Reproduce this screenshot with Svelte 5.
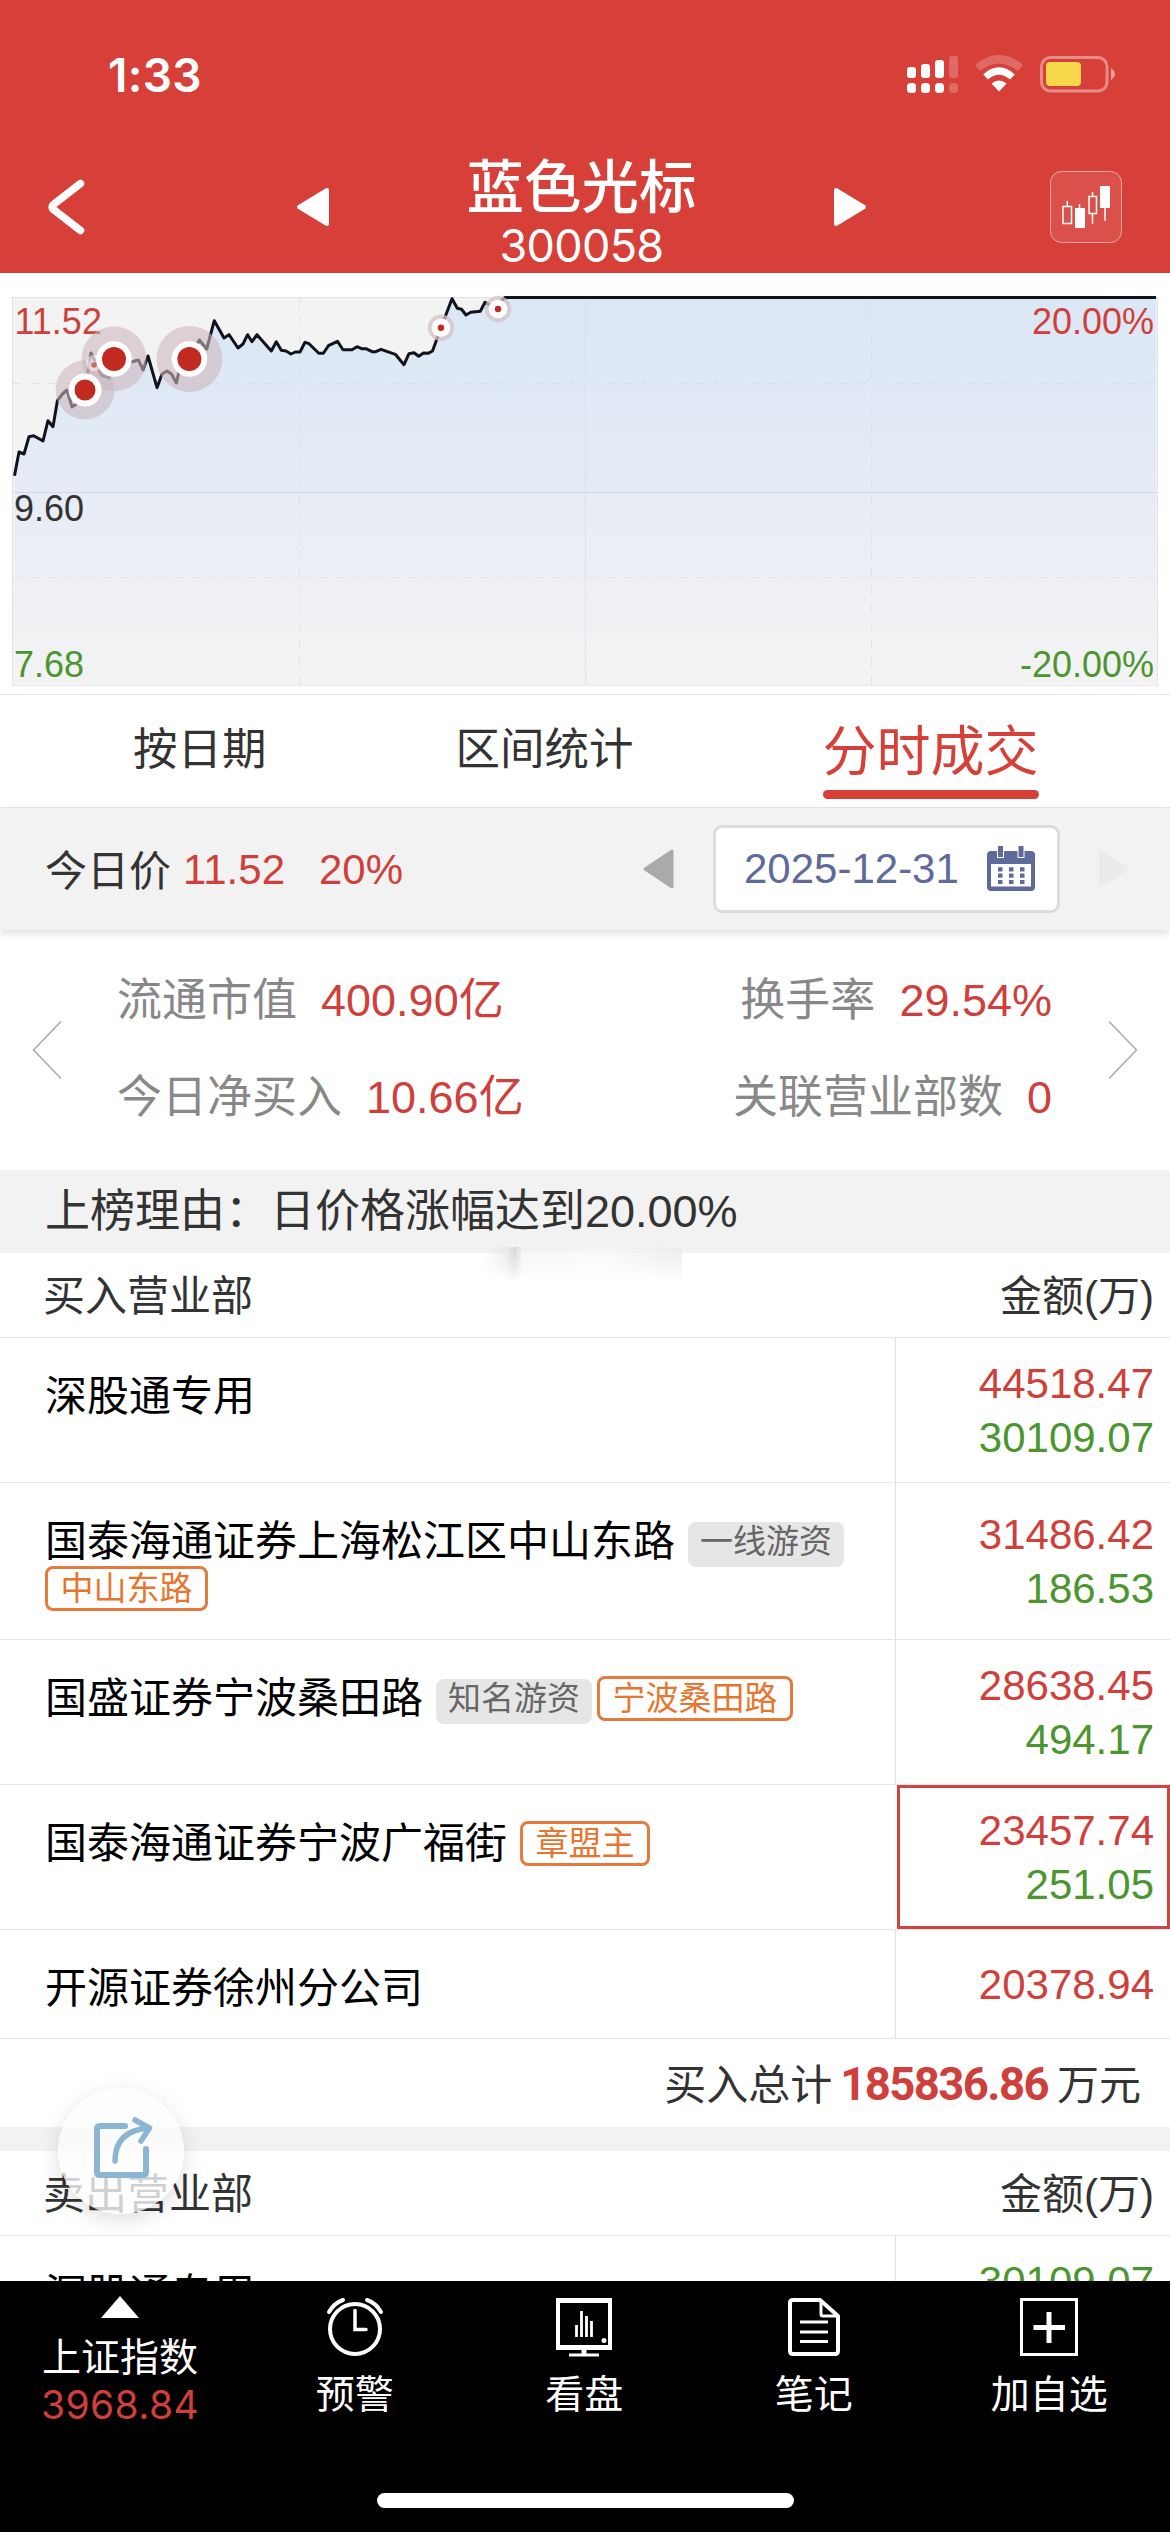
<script>
  const seats = [
    { name: '深股通专用', tags: [], amounts: ['44518.47', '30109.07'] },
    {
      name: '国泰海通证券上海松江区中山东路',
      tags: [{ text: '一线游资', kind: 'grey' }, { text: '中山东路', kind: 'orange' }],
      amounts: ['31486.42', '186.53'],
      tall: true
    },
    {
      name: '国盛证券宁波桑田路',
      tags: [{ text: '知名游资', kind: 'grey' }, { text: '宁波桑田路', kind: 'orange' }],
      amounts: ['28638.45', '494.17']
    },
    {
      name: '国泰海通证券宁波广福街',
      tags: [{ text: '章盟主', kind: 'orange' }],
      amounts: ['23457.74', '251.05'],
      active: true
    },
    { name: '开源证券徐州分公司', tags: [], amounts: ['20378.94'] }
  ];

  // Intraday price line, in chart units (origin at the chart's top left)
  const line =
    '14.5,202.7 19,179 24,181 29,163.7 33.7,162.7 43,168 48,147.7 53,153.7 57.4,127.7 62.4,121 67,117 72,134 76.5,131 85,117 91,80 101.4,102 109,105 114,86 132,88.7 138.5,87 143,97 148,83 157,114.7 162,101 167,98 171.5,101 176.4,110 180,94 189.4,86 199.4,67 206.7,76 214.3,47.7 224,65 229,61.7 238,75 243,71 247.6,61.7 252,68.7 257,61.7 271.3,78 276.3,68.7 281.3,77.3 286,78 291,81 295.4,79 300,79 305,69.3 309,70.7 318.8,80.3 323.4,80.3 328.4,72.7 337.5,68.3 343,76.7 352,76.7 357,73.7 361.6,75.7 366,75.7 372,78.7 375.8,78.7 381,76.3 395.3,81.3 404,91.7 409,80.7 414,79.7 418.7,83.3 423.6,80 428,80.3 432.5,78 441,54.7 452,25.7 457.3,35.3 461.5,36.3 466,42 470.7,39.3 480.3,38.3 485,29.3 494,34 505,24.5 1156,24.5';

  const bigDots = [
    { x: 85, y: 117, halo: 29.5, ring: 16.5, core: 10.5 },
    { x: 114, y: 86, halo: 32.5, ring: 17.8, core: 12 },
    { x: 189.4, y: 86, halo: 33, ring: 17.8, core: 12 }
  ];
  const smallDots = [
    { x: 441, y: 54.7 },
    { x: 498, y: 36 }
  ];
</script>

<div class="screen">
  <header>
    <div class="status">
      <span class="time">1:33</span>
      <svg class="status-icons" width="210" height="40" viewBox="906 54 210 40">
        <g fill="#fff">
          <rect x="907" y="67" width="9" height="11" rx="3" />
          <rect x="921" y="64" width="9" height="14" rx="3" />
          <rect x="935" y="60" width="9" height="18" rx="3" />
          <rect x="907" y="83" width="9" height="10" rx="3.5" />
          <rect x="921" y="83" width="9" height="10" rx="3.5" />
          <rect x="935" y="83" width="9" height="10" rx="3.5" />
        </g>
        <g fill="#fff" opacity=".22">
          <rect x="949" y="56" width="9" height="22" rx="3" />
          <rect x="949" y="83" width="9" height="10" rx="3.5" />
        </g>
        <path d="M977.5 68 Q999 50.5 1020.5 68" fill="none" stroke="#fff" stroke-opacity=".22" stroke-width="8" />
        <path d="M985.5 77 Q999 65 1012.5 77" fill="none" stroke="#fff" stroke-width="7" />
        <path d="M991.5 83.5 Q999 77.5 1006.5 83.5 L999 91.5 Z" fill="#fff" />
        <rect x="1041.5" y="57.5" width="65.5" height="33.5" rx="9" fill="none" stroke="#fff" stroke-opacity=".4" stroke-width="3" />
        <rect x="1046" y="62" width="35" height="24" rx="4" fill="#f8d84a" />
        <path d="M1111 68 Q1115 71 1115 74 Q1115 77 1111 80 Z" fill="#fff" fill-opacity=".5" />
      </svg>
    </div>
    <nav>
      <svg class="back" width="44" height="62" viewBox="44 176 44 62">
        <path d="M80.500 183.500 L53.500 204.500 Q50.500 207 53.500 209.500 L80.500 230.500" fill="none" stroke="#fff" stroke-width="7.500" stroke-linecap="round" />
      </svg>
      <svg class="left" width="36" height="42" viewBox="294 186 36 42">
        <path d="M326 190 L298 207 L326 224 Z" fill="#fff" stroke="#fff" stroke-width="4" stroke-linejoin="round" />
      </svg>
      <div class="title">
        <h1>蓝色光标</h1>
        <span>300058</span>
      </div>
      <svg width="36" height="42" viewBox="833 186 36 42">
        <path d="M837 190 L865 207 L837 224 Z" fill="#fff" stroke="#fff" stroke-width="4" stroke-linejoin="round" />
      </svg>
      <svg class="kline" width="74" height="74" viewBox="1049 170 74 74">
        <rect x="1050.5" y="171.5" width="71" height="71" rx="11" fill="#fff" fill-opacity=".09" stroke="#fff" stroke-opacity=".5" />
        <g fill="none" stroke="#fff" stroke-width="1.5">
          <rect x="1063" y="206.5" width="8.5" height="17" />
          <rect x="1089" y="196.5" width="7.5" height="17" />
          <path d="M1067.300 201 V206 M1079.5 204 V208 M1092.5 192 V196 M1092.5 214 V224 M1105 208 V221" />
        </g>
        <rect x="1075" y="208" width="10" height="20" fill="#fff" />
        <rect x="1100" y="186" width="10" height="22" fill="#fff" />
      </svg>
    </nav>
  </header>

  <section class="chart">
    <svg width="1170" height="421" viewBox="0 0 1170 421">
      <defs>
        <linearGradient id="area" x1="0" y1="24" x2="0" y2="413" gradientUnits="userSpaceOnUse">
          <stop offset="0" stop-color="#dae7f5" />
          <stop offset=".5" stop-color="#e6ecf6" />
          <stop offset=".75" stop-color="#eef0f4" />
          <stop offset="1" stop-color="#f3f3f3" />
        </linearGradient>
      </defs>
      <rect x="12.5" y="24.5" width="1145" height="388" fill="#f3f3f3" stroke="#e2e2e2" />
      <polygon points={`14.5,412.5 ${line} 1156,412.5`} fill="url(#area)" />
      <g stroke="#d4dae4" fill="none">
        <path d="M12 219.5 H1158" />
        <path d="M585.5 25 V412" stroke-opacity=".6" />
        <path d="M12 110.5 H1158 M12 304.5 H1158" stroke-dasharray="9 9" stroke-opacity=".6" />
        <path d="M299.5 25 V412 M871.5 25 V412" stroke-dasharray="9 9" stroke-opacity=".6" />
      </g>
      <polyline points={line} fill="none" stroke="#11131c" stroke-width="3" stroke-linejoin="round" />
      <path d="M505 24.500 H1156" stroke="#11131c" stroke-width="3" />
      <g class="axis">
        <text x="14.5" y="61" fill="#cf3f3b">11.52</text>
        <text x="14" y="247.500" fill="#333">9.60</text>
        <text x="14" y="404" fill="#4b962f">7.68</text>
        <text x="1154" y="61" fill="#cf3f3b" text-anchor="end">20.00%</text>
        <text x="1154" y="404" fill="#4b962f" text-anchor="end">-20.00%</text>
      </g>
      {#each bigDots as d}
        <circle cx={d.x} cy={d.y} r={d.halo} fill="#cbb7bd" fill-opacity=".58" />
      {/each}
      <circle cx="94" cy="90" r="8" fill="#fff" fill-opacity=".5" />
      <circle cx="94" cy="92" r="2.8" fill="#d4696c" />
      {#each bigDots as d}
        <circle cx={d.x} cy={d.y} r={d.ring} fill="#fff" />
        <circle cx={d.x} cy={d.y} r={d.core} fill="#c02a21" />
      {/each}
      {#each smallDots as d}
        <circle cx={d.x} cy={d.y} r="13.2" fill="#d3c3c8" fill-opacity=".75" />
        <circle cx={d.x} cy={d.y} r="9.3" fill="#fff" />
        <circle cx={d.x} cy={d.y} r="3.2" fill="#c02a21" />
      {/each}
    </svg>
  </section>

  <div class="tabs">
    <span class="t1">按日期</span>
    <span class="t2">区间统计</span>
    <span class="t3">分时成交</span>
  </div>

  <div class="pricebar">
    <span class="label">今日价</span>
    <span class="red now">11.52</span>
    <span class="red pct">20%</span>
    <svg class="prev" width="33" height="42" viewBox="643 849 33 42">
      <path d="M673 852 L646 870 L673 888 Z" fill="#aaa" stroke="#aaa" stroke-width="3" stroke-linejoin="round" />
    </svg>
    <div class="date">
      <span>2025-12-31</span>
      <svg width="48" height="46" viewBox="0 0 48 46">
        <rect x="0" y="5" width="48" height="40" rx="4" fill="#5e6a9c" />
        <rect x="4" y="18" width="40" height="22.5" fill="#fff" />
        <g fill="#5e6a9c" stroke="#fff" stroke-width="1">
          <rect x="10.5" y="-.5" width="6" height="12" />
          <rect x="31" y="-.5" width="6" height="12" />
        </g>
        <path d="M11 23.300 H37.5 M11 29.700 H37.5 M11 36 H37.5" fill="none" stroke="#5e6a9c" stroke-width="4.2" stroke-dasharray="4.5 6.5" />
      </svg>
    </div>
    <svg class="next" width="33" height="42" viewBox="1098 849 33 42">
      <path d="M1099 849 L1130 870 L1099 889 Z" fill="#ebebeb" />
    </svg>
  </div>

  <section class="stats">
    <svg width="30" height="60" viewBox="0 0 30 60"><path d="M29 1.500 L1.500 30 L29 58.500" fill="none" stroke="#aaa" stroke-width="1.5" /></svg>
    <div class="grid">
      <p><span>流通市值</span><b>400.90亿</b></p>
      <p class="end"><span>换手率</span><b>29.54%</b></p>
      <p><span>今日净买入</span><b>10.66亿</b></p>
      <p class="end"><span>关联营业部数</span><b>0</b></p>
    </div>
    <svg width="30" height="60" viewBox="0 0 30 60"><path d="M1 1.500 L28.500 30 L1 58.500" fill="none" stroke="#aaa" stroke-width="1.5" /></svg>
  </section>

  <div class="reason">上榜理由：日价格涨幅达到20.00%<i class="smudge"></i></div>

  <div class="thead"><span>买入营业部</span><span>金额(万)</span></div>
  {#each seats as s}
    <div class="row" class:tall={s.tall} class:short={s.amounts.length === 1}>
      <div class="name">
        <span>{s.name}</span>
        {#each s.tags as t}
          <em class={t.kind}>{t.text}</em>
        {/each}
      </div>
      <div class="amount" class:active={s.active}>
        {#each s.amounts as a, i}
          <span class={i === 0 ? 'buy' : 'sell'}>{a}</span>
        {/each}
      </div>
    </div>
  {/each}
  <div class="total"><span>买入总计</span><strong>185836.86</strong><span>万元</span></div>
  <div class="gap"></div>
  <div class="thead"><span>卖出营业部</span><span>金额(万)</span></div>
  <div class="row last">
    <div class="name"><span>深股通专用</span></div>
    <div class="amount"><span class="sell">30109.07</span></div>
  </div>

  <footer>
    <div class="item index">
      <svg width="38" height="22" viewBox="0 0 38 22"><path d="M19 0 L38 22 H0 Z" fill="#fff" /></svg>
      <span>上证指数</span>
      <span class="idx">3968.84</span>
    </div>
    <div class="item">
      <svg width="58" height="60" viewBox="0 0 58 60" fill="none" stroke="#fff" stroke-linecap="round">
        <circle cx="29" cy="32" r="25" stroke-width="4" />
        <path d="M29 13.500 V32.500 H40" stroke-width="3.5" />
        <path d="M3 15 Q8 6 17 3 M55 15 Q50 6 41 3" stroke-width="4" />
      </svg>
      <span>预警</span>
    </div>
    <div class="item">
      <svg width="58" height="60" viewBox="0 0 58 60" fill="none" stroke="#fff">
        <path d="M1 1 H57 V53 H1 Z M5 6 V48 H53 V6 Z" fill="#fff" fill-rule="evenodd" stroke="none" />
        <path d="M29 52 V57" stroke-width="5" />
        <path d="M14 58 H44" stroke-width="3" />
        <path d="M21.500 28 V40 M26.500 14 V40 M31.500 19 V40 M36.500 24 V40" stroke-width="2.8" />
        <circle cx="49" cy="43.500" r="2.5" fill="#fff" stroke="none" />
      </svg>
      <span>看盘</span>
    </div>
    <div class="item">
      <svg width="58" height="60" viewBox="0 0 58 60" fill="none" stroke="#fff" stroke-width="4" stroke-linejoin="round">
        <path d="M35 3 H8 Q5 3 5 6 V54 Q5 57 8 57 H50 Q53 57 53 54 V19 Z" />
        <path d="M36 5 V17 Q36 19 38 19 H52" stroke-width="3" />
        <path d="M15 25 H43 M15 35 H43 M15 44.500 H43" stroke-width="3" />
      </svg>
      <span>笔记</span>
    </div>
    <div class="item add">
      <svg width="58" height="60" viewBox="0 0 58 60" fill="none" stroke="#fff">
        <rect x="1.5" y="2.5" width="55" height="55" stroke-width="3" />
        <path d="M29 15 V46 M13.500 30.500 H45" stroke-width="5" />
      </svg>
      <span>加自选</span>
    </div>
    <div class="home"></div>
  </footer>

  <div class="fab">
    <svg width="62" height="64" viewBox="92 2115 62 64" fill="none" stroke="#8ab5d3" stroke-width="6" stroke-linecap="round" stroke-linejoin="round">
      <path d="M125 2126 H100 Q97 2126 97 2129 V2172 Q97 2175 100 2175 H143 Q146 2175 146 2172 V2149" />
      <path d="M115 2161 Q115 2131 148 2128 M135 2120 L149.500 2128 L141 2141" stroke-width="5.5" />
    </svg>
  </div>
</div>

<style>
  :global(body) { background: #fff; }
  .screen {
    position: relative;
    width: 1170px;
    height: 2532px;
    overflow: hidden;
    background: #fff;
    font-family: 'Liberation Sans', 'Noto Sans CJK SC', sans-serif;
    font-size: 42px;
    color: #333;
  }
  svg { display: block; flex: none; }
  header { height: 273px; background: #d64039; color: #fff; }
  .status { display: flex; justify-content: space-between; height: 145px; padding: 0 54px 0 108px; }
  .time { font: 600 46px/60px Inter, sans-serif; margin-top: 45px; letter-spacing: .3px; }
  .status-icons { margin-top: 54px; }
  nav { display: flex; align-items: center; justify-content: space-between; height: 124px; padding: 0 47px 0 44px; }
  .title { display: flex; flex-direction: column; align-items: center; width: 300px; margin-top: 14px; }
  .title h1 { margin: 0; font-size: 57.5px; line-height: 64px; font-weight: 500; }
  .title span { font: 400 45px/52px Inter, sans-serif; letter-spacing: -.7px; }
  .left { margin-left: 106px; }
  .kline { margin-left: 80px; }
  .chart { height: 421px; border-bottom: 1px solid #e6e6e6; }
  .axis { font-size: 36px; }
  .tabs { display: flex; height: 113px; font-size: 44.5px; line-height: 109px; border-bottom: 1px solid #e6e6e6; box-sizing: border-box; }
  .t1 { margin-left: 133px; }
  .t2 { margin-left: 189px; }
  .t3 { position: relative; margin-left: 189px; font-size: 54px; line-height: 114px; color: #d64039; }
  .t3::after { content: ''; position: absolute; left: 0; right: 0; top: 95px; height: 9px; border-radius: 4.5px; background: #d64039; }
  .red { color: #cf3f3b; }
  .pricebar { display: flex; align-items: center; height: 122px; padding-left: 45px; background: #f2f2f2; box-shadow: 0 4px 8px rgba(0, 0, 0, .12); }
  .label { margin-top: -3px; }
  .now { margin-left: 12px; margin-top: 2px; }
  .pct { margin-left: 34px; margin-top: 2px; }
  .prev { margin-left: auto; margin-right: 38px; }
  .date { display: flex; align-items: center; justify-content: space-between; box-sizing: border-box; width: 347px; height: 88px; padding: 0 22px 0 28px; border: 3px solid #dcdcdc; border-radius: 9px; background: #fff; color: #5e6a9c; }
  .next { margin: 0 39px 0 38px; }
  .stats { display: flex; align-items: center; height: 240px; padding: 0 32px; font-size: 45px; }
  .grid { display: grid; grid-template-columns: auto auto; flex: 1; padding: 0 56px 2px 55px; }
  .grid p { display: flex; gap: 24px; margin: 0; line-height: 97px; color: #888; }
  .grid .end { justify-content: flex-end; }
  .grid b { font-weight: 400; color: #cf3f3b; }
  .reason { position: relative; height: 83px; padding-left: 45px; background: #f2f2f2; font-size: 45px; line-height: 84px; }
  .smudge { position: absolute; left: 483px; top: 77px; width: 199px; height: 36px; background: linear-gradient(90deg, transparent, rgba(228, 228, 228, .6) 12%, rgba(205, 205, 205, .65) 16%, rgba(240, 240, 240, .5) 20%, rgba(248, 248, 248, .6) 60%, rgba(236, 236, 236, .8)); -webkit-mask: linear-gradient(#000 30%, transparent); mask: linear-gradient(#000 30%, transparent); }
  .thead { display: flex; justify-content: space-between; height: 85px; padding: 0 16px 0 43px; line-height: 87px; border-bottom: 1px solid #e6e6e6; box-sizing: border-box; }
  .row { display: flex; height: 145px; border-bottom: 1px solid #e6e6e6; box-sizing: border-box; }
  .row.tall { height: 157px; }
  .row.short { height: 109px; }
  .name { display: flex; flex-wrap: wrap; align-content: flex-start; align-items: flex-start; gap: 0; width: 895px; padding: 36px 0 0 45px; line-height: 45px; color: #000; box-sizing: border-box; }
  .name em { font-style: normal; font-size: 33px; height: 45px; box-sizing: border-box; border-radius: 8px; }
  .name span + em { margin-left: 13px; }
  .grey { margin-top: 3px; padding: 0 12px; line-height: 39px; background: #e6e6e6; color: #666; }
  .orange { padding: 0 12.5px; line-height: 40px; border: 3px solid #e67a3c; color: #e5752f; }
  .grey + .orange { margin-left: 5px; }
  .tall .grey + .orange { margin-left: 0; margin-top: -1px; }
  .amount { display: flex; flex-direction: column; justify-content: center; align-items: flex-end; flex: 1; padding: 2px 16px 0 0; border-left: 1px solid #e0e0e0; line-height: 54px; }
  .amount.active { margin-left: 2px; padding-right: 13px; border: 3px solid #cc4542; }
  .last .amount { padding: 0 16px 52px 0; }
  .buy { color: #cf3f3b; }
  .sell { color: #4b962f; }
  .total { display: flex; justify-content: flex-end; height: 88px; padding-right: 29px; line-height: 94px; box-sizing: border-box; }
  .total strong { margin: 0 9px 0 8px; font: 700 45.5px/92px Roboto, sans-serif; letter-spacing: -1.6px; color: #cf3f3b; }
  .gap { height: 24px; background: #f2f2f2; }
  footer { position: absolute; left: 0; bottom: 0; width: 1170px; height: 251px; display: flex; background: #000; color: #fff; font-size: 39px; }
  .item { display: flex; flex-direction: column; align-items: center; flex: none; width: 229.5px; padding-top: 16px; line-height: 45px; box-sizing: border-box; }
  .item svg { margin-bottom: 15px; }
  .item.index { width: 240px; padding-top: 15px; }
  .item.add { width: 241.5px; }
  .index svg { margin-bottom: 17px; }
  .idx { margin-top: 1px; font: 400 39px/48px Inter, sans-serif; letter-spacing: .4px; color: #cf3f3b; }
  .home { position: absolute; left: 377px; bottom: 24px; width: 417px; height: 15px; border-radius: 8px; background: #fff; }
  .fab { position: absolute; left: 58px; top: 2088px; width: 126px; height: 126px; border-radius: 50%; background: rgba(252, 252, 252, .78); box-shadow: 0 6px 22px rgba(0, 0, 0, .13); display: flex; align-items: center; justify-content: center; }
  .fab svg { margin: 0 0 8px 4px; }
</style>
